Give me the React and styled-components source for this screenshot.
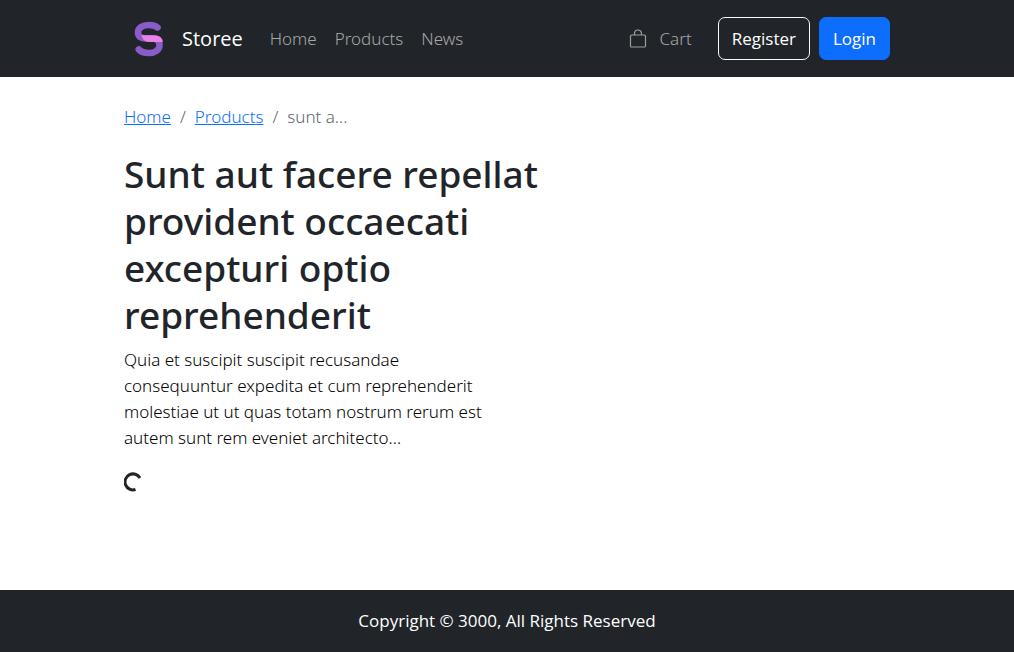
import React from "react";
import styled, { createGlobalStyle } from "styled-components";

const GlobalStyle = createGlobalStyle`
  *, *::before, *::after { box-sizing: border-box; }
  body {
    margin: 0;
    background: #fff;
    color: #212529;
    font-family: "Segoe UI", "Open Sans", "Noto Sans", sans-serif;
    font-size: 17px;
    line-height: 26px;
  }
`;

const Page = styled.div`
  min-height: 100vh;
  display: flex;
  flex-direction: column;
`;

const Container = styled.div`
  width: 100%;
  max-width: 792px;
  margin: 0 auto;
  padding: 0 13px;
`;

const Header = styled.header`
  background: #212529;
  padding: 17px 0;
`;

const Bar = styled(Container)`
  display: flex;
  align-items: center;
`;

const Brand = styled.a`
  display: flex;
  align-items: center;
  gap: 18px;
  margin-right: 18px;
  padding-left: 10px;
  color: #fff;
  font-size: 20px;
  text-decoration: none;
`;

const Nav = styled.nav`
  display: flex;
  flex: 1;
`;

const NavLink = styled.a`
  display: flex;
  align-items: center;
  gap: 13px;
  padding: 8px 9px;
  color: #a6a8a9;
  font-family: "Noto Sans", "Open Sans", sans-serif;
  font-weight: 300;
  text-decoration: none;
`;

const Actions = styled.div`
  display: flex;
  align-items: center;
  gap: 9px;
  margin-left: 17px;
`;

const Button = styled.button`
  height: 43px;
  padding: 0 13px;
  border: 1px solid ${(p) => (p.$primary ? "#0d6efd" : "#f8f9fa")};
  border-radius: 7px;
  background: ${(p) => (p.$primary ? "#0d6efd" : "transparent")};
  color: #fff;
  font: inherit;
`;

const Main = styled.main`
  flex: 1;
  padding-top: 27px;
`;

const Crumbs = styled.ol`
  display: flex;
  margin: 0 0 20px;
  padding: 0;
  font-family: "Noto Sans", "Open Sans", sans-serif;
  font-weight: 300;
  list-style: none;
`;

const Crumb = styled.li`
  color: #5d656d;

  & + &::before {
    content: "/";
    padding: 0 9px;
  }

  a { color: #0d6efd; }
`;

const Article = styled.article`
  max-width: 446px;
`;

const Title = styled.h1`
  margin: 0 0 9px;
  font-family: "Noto Sans", "Open Sans", sans-serif;
  font-size: 37px;
  font-weight: 500;
  line-height: 47px;
`;

const Summary = styled.p`
  max-width: 372px;
  margin: 0 0 21px;
  color: #000;
  font-family: "Noto Sans", "Open Sans", sans-serif;
  font-weight: 300;
`;

const Footer = styled.footer`
  padding: 18px 0;
  background: #212529;
  color: #fff;
  text-align: center;
`;

const Spinner = styled.svg`
  display: block;
`;

function Logo() {
  return (
    <svg width="30" height="36" viewBox="0 0 30 36" fill="none" aria-hidden="true">
      <path
        d="M23.500 6.500C21 4.500 18.500 4 15 4C8.500 4 4 7 4 11.500C4 15.500 7 17.500 12 17.500H18C23 17.500 25.500 20 25.500 24C25.500 29 21 32 15 32C10 32 7 31 4.800 28.500"
        stroke="#8a5bc9"
        strokeWidth="6.600"
        strokeLinecap="round"
      />
      <path d="M7.500 14.300H20C25 14.300 28.800 17 28.800 21H15C11 21 8.500 18.500 7.500 14.300Z" fill="#ea82e5" />
    </svg>
  );
}

function BagIcon() {
  return (
    <svg width="18" height="20" viewBox="0 0 18 20" fill="none" stroke="#9b9d9e" aria-hidden="true">
      <rect x="1.500" y="6" width="15" height="12" rx="1" strokeWidth="1.200" />
      <path d="M5.500 6V4.500a3.500 3.500 0 0 1 7 0V6" strokeWidth="1.200" />
    </svg>
  );
}

export default function App() {
  return (
    <Page>
      <GlobalStyle />
      <Header>
        <Bar>
          <Brand href="#">
            <Logo />
            Storee
          </Brand>
          <Nav aria-label="Main">
            <NavLink href="#">Home</NavLink>
            <NavLink href="#products">Products</NavLink>
            <NavLink href="#news">News</NavLink>
          </Nav>
          <NavLink href="#cart">
            <BagIcon />
            Cart
          </NavLink>
          <Actions>
            <Button type="button">Register</Button>
            <Button type="button" $primary>Login</Button>
          </Actions>
        </Bar>
      </Header>
      <Main>
        <Container>
          <nav aria-label="Breadcrumb">
            <Crumbs>
              <Crumb><a href="#">Home</a></Crumb>
              <Crumb><a href="#products">Products</a></Crumb>
              <Crumb aria-current="page">sunt a...</Crumb>
            </Crumbs>
          </nav>
          <Article>
            <Title>Sunt aut facere repellat provident occaecati excepturi optio reprehenderit</Title>
            <Summary>
              Quia et suscipit suscipit recusandae consequuntur expedita et cum
              reprehenderit molestiae ut ut quas totam nostrum rerum est autem
              sunt rem eveniet architecto...
            </Summary>
            <Spinner width="18" height="20" viewBox="0 0 18 20" fill="none" role="img" aria-label="Loading">
              <path d="M16 6A8 8 0 1 0 11.500 17.500" stroke="#212529" strokeWidth="3" />
            </Spinner>
          </Article>
        </Container>
      </Main>
      <Footer>Copyright © 3000, All Rights Reserved</Footer>
    </Page>
  );
}
